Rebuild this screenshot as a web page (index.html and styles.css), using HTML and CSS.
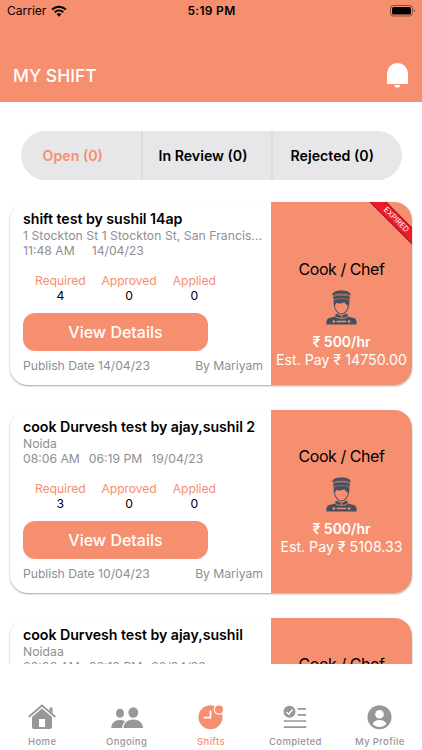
FILE: index.html
```html
<!DOCTYPE html>
<html lang="en">
<head>
    <meta charset="UTF-8">
    <meta name="viewport" content="width=device-width, initial-scale=1.0">
    <title>My Shift</title>
    <link rel="stylesheet" href="styles.css">
</head>
<body>
    <!-- Shared by every shift card -->
    <svg class="symbols" aria-hidden="true">
        <symbol id="staff" viewBox="0 0 31 35">
            <path fill="#46505c" d="M6.300 4.500C6.500 1.900 10.500.4 15.500.4s9 1.500 9.200 4.100l-1 2.200c-5.500-1.900-10.900-1.900-16.400 0z"/>
            <path fill="none" stroke="#f58f70" stroke-width=".7" d="M6.500 5.700c6-2 12-2 18 0"/>
            <path fill="#46505c" d="M7.300 6.700c5.500-1.700 10.900-1.700 16.400 0v3.800H7.300z"/>
            <path fill="none" stroke="#f58f70" stroke-width=".6" d="M7.300 9.900c5.500-1.500 10.900-1.500 16.400 0"/>
            <path fill="#46505c" d="M7.900 10.300c5-1.300 10.200-1.300 15.200 0 .5 2 .4 4.200-.3 6.300-.6 3.700-3.600 8-7.300 8s-6.700-4.300-7.300-8c-.7-2.100-.8-4.300-.3-6.300z"/>
            <path fill="#f58f70" d="M9 15.300c.6-.6 1-1.400 1.200-2.300 3.800 1 6.500.2 8.100-1.100.6 1.800 1.900 2.700 3.500 3.400 0 3.900-2.800 8.300-6.300 8.300S9 19.200 9 15.300z"/>
            <path fill="#46505c" d="M9.700 23.800l2.300.3c2 2 5 2 7 0l2.300-.3.600 2.600 5.700 1.500c2 .6 3 2.100 3 4.100v2.600H.4V32c0-2 1-3.500 3-4.100l5.700-1.500z"/>
            <path fill="none" stroke="#f58f70" stroke-width=".8" d="M9.200 26.500c2 1.500 4 1.800 6.300 1.800s4.300-.3 6.300-1.800M15.500 25.500v2.800"/>
            <path fill="none" stroke="#f58f70" stroke-width="1.300" d="M10.700 31.500h9.600"/>
            <circle cx="7.900" cy="31.500" r="1.300" fill="#f58f70"/>
            <circle cx="23.100" cy="31.500" r="1.300" fill="#f58f70"/>
        </symbol>
    </svg>

    <div class="header">
        <div class="status-bar">
            <div class="carrier">
                <span>Carrier</span>
                <svg width="16" height="12" viewBox="0 0 16 12">
                    <path fill="none" stroke="#000" stroke-width="2" d="M1.100 4.500c4-3.800 9.800-3.800 13.800 0M3.700 7.300c2.500-2.300 6.100-2.300 8.600 0"/>
                    <path d="M5.500 9.100c1.500-1.300 3.500-1.300 5 0L8 11.700z"/>
                </svg>
            </div>
            <div class="clock">5:19 PM</div>
            <div class="battery">
                <svg width="26" height="12" viewBox="0 0 26 12">
                    <rect x=".5" y=".5" width="22" height="10.500" rx="3" fill="none" stroke="#000" stroke-opacity=".45"/>
                    <rect x="2" y="2" width="19" height="7.500" rx="1.600"/>
                    <path fill-opacity=".5" d="M24 4c1.300.5 1.300 3 0 3.500z"/>
                </svg>
            </div>
        </div>
        <div class="title-bar">
            <h1>MY SHIFT</h1>
            <svg width="21" height="25" viewBox="0 0 21 25" fill="#fff">
                <path d="M0 21V10.500a10.500 10.500 0 0 1 21 0V21z"/>
                <path d="M7.500 22h5.800c-.3 1.800-1.300 2.700-2.900 2.700S7.800 23.800 7.500 22z"/>
            </svg>
        </div>
    </div>

    <div class="tabs">
        <div class="tab active">Open (0)</div>
        <div class="tab">In Review (0)</div>
        <div class="tab">Rejected (0)</div>
    </div>

    <div class="shift-list">
        <div class="card">
            <div class="info">
                <h2>shift test by sushil 14ap</h2>
                <div class="address">1 Stockton St 1 Stockton St, San Francis...</div>
                <div class="times wide"><span>11:48 AM</span><span>14/04/23</span></div>
                <div class="counts">
                    <div class="count"><span>Required</span><b>4</b></div>
                    <div class="count"><span>Approved</span><b>0</b></div>
                    <div class="count"><span>Applied</span><b>0</b></div>
                </div>
                <button class="btn">View Details</button>
                <div class="publish"><span>Publish Date 14/04/23</span><span>By Mariyam</span></div>
            </div>
            <div class="role expired">
                <div class="ribbon">EXPIRED</div>
                <div class="role-name">Cook / Chef</div>
                <svg class="role-icon"><use href="#staff"/></svg>
                <div class="rate">₹ 500/hr</div>
                <div class="pay">Est. Pay ₹ 14750.00</div>
            </div>
        </div>

        <div class="card">
            <div class="info">
                <h2>cook Durvesh test by ajay,sushil 2</h2>
                <div class="address">Noida</div>
                <div class="times"><span>08:06 AM</span><span>06:19 PM</span><span>19/04/23</span></div>
                <div class="counts">
                    <div class="count"><span>Required</span><b>3</b></div>
                    <div class="count"><span>Approved</span><b>0</b></div>
                    <div class="count"><span>Applied</span><b>0</b></div>
                </div>
                <button class="btn">View Details</button>
                <div class="publish"><span>Publish Date 10/04/23</span><span>By Mariyam</span></div>
            </div>
            <div class="role">
                <div class="role-name">Cook / Chef</div>
                <svg class="role-icon"><use href="#staff"/></svg>
                <div class="rate">₹ 500/hr</div>
                <div class="pay">Est. Pay ₹ 5108.33</div>
            </div>
        </div>

        <div class="card">
            <div class="info">
                <h2>cook Durvesh test by ajay,sushil</h2>
                <div class="address">Noidaa</div>
                <div class="times"><span>08:06 AM</span><span>06:19 PM</span><span>20/04/23</span></div>
            </div>
            <div class="role">
                <div class="role-name">Cook / Chef</div>
                <svg class="role-icon"><use href="#staff"/></svg>
                <div class="rate">₹ 500/hr</div>
                <div class="pay">Est. Pay ₹ 5108.33</div>
            </div>
        </div>
    </div>

    <div class="nav">
        <div class="nav-item">
            <svg width="28" height="26" viewBox="0 0 28 26" fill="#979797">
                <path fill="none" stroke="#979797" stroke-width="1.800" stroke-linecap="round" stroke-linejoin="round" d="M1.200 12.500L14 1.500l12.800 11"/>
                <path d="M21.500 3.500h3v6l-3-2.500z"/>
                <path fill-rule="evenodd" d="M14 4.500l10 8.600V23c0 1.300-.7 2-2 2H6c-1.300 0-2-.7-2-2v-9.900zM11 15v8h6v-8z"/>
            </svg>
            <span>Home</span>
        </div>
        <div class="nav-item">
            <svg width="32" height="26" viewBox="0 0 32 26" fill="#979797">
                <ellipse cx="9" cy="9.300" rx="4" ry="4.500"/>
                <ellipse cx="22.300" cy="8.500" rx="4.900" ry="5.200"/>
                <path d="M.3 24c.1-4.500 3.300-8 8.700-8 2.200 0 3.800.5 5.200 1.500-2 1.700-3 3.900-3.100 6.500z"/>
                <path d="M12.500 24c.2-5 4-8.500 9.800-8.500S31.700 19 32 24z"/>
            </svg>
            <span>Ongoing</span>
        </div>
        <div class="nav-item active">
            <svg width="26" height="26" viewBox="0 0 26 26">
                <circle cx="12.500" cy="13.300" r="12" fill="#f58f70"/>
                <path fill="none" stroke="#fff" stroke-width="1.700" d="M12.500 6.500v7.200H5.500"/>
                <circle cx="21" cy="5.500" r="4.700" fill="#f58f70" stroke="#fff" stroke-width="1.200"/>
            </svg>
            <span>Shifts</span>
        </div>
        <div class="nav-item">
            <svg width="24" height="26" viewBox="0 0 24 26">
                <circle cx="6.500" cy="7.800" r="6" fill="#979797"/>
                <path fill="none" stroke="#fff" stroke-width="1.500" d="M3.500 8l2.200 2.200 4-4.700"/>
                <path stroke="#979797" stroke-width="1.700" stroke-linecap="round" d="M15.300 4.800h7.200M15.300 10.800h7.200M1.500 17h21M1.500 23.200h21"/>
            </svg>
            <span>Completed</span>
        </div>
        <div class="nav-item">
            <svg width="24" height="26" viewBox="0 0 24 26">
                <circle cx="11.500" cy="13.200" r="12" fill="#979797"/>
                <circle cx="11.500" cy="10.200" r="4.300" fill="#fff"/>
                <path fill="#fff" d="M4.500 19.700c1.700-2.700 4-3.700 7-3.700s5.300 1 7 3.700c-3.700 4.300-10.300 4.300-14 0z"/>
            </svg>
            <span>My Profile</span>
        </div>
    </div>
</body>
</html>
```
FILE: styles.css
```css
* {
    box-sizing: border-box;
}
body {
    margin: 0;
    height: 750px;
    display: flex;
    flex-direction: column;
    overflow: hidden;
    background: #fff;
    color: #000;
    font-family: Inter, 'Noto Sans', sans-serif;
}
h1, h2 {
    margin: 0;
}
svg {
    display: block;
    flex: none;
    overflow: visible;
}
.symbols {
    position: absolute;
    width: 0;
    height: 0;
}
.header {
    height: 102px;
    flex: none;
    background: #f58f70;
}
.status-bar {
    display: flex;
    align-items: center;
    height: 21px;
    padding: 0 6px 0 7px;
    font-size: 12px;
}
.carrier {
    flex: 1;
    display: flex;
    align-items: center;
    gap: 5px;
}
.clock {
    font-weight: 600;
    letter-spacing: 0.3px;
}
.battery {
    flex: 1;
    display: flex;
    justify-content: flex-end;
}
.title-bar {
    display: flex;
    justify-content: space-between;
    align-items: center;
    height: 57px;
    margin-top: 26px;
    padding: 0 14px 0 13px;
}
.title-bar h1 {
    color: #fff;
    font-size: 17.5px;
    font-weight: 500;
}
.tabs {
    display: flex;
    flex: none;
    height: 49px;
    margin: 28.5px 20.5px 0;
    border-radius: 25px;
    background: #e7e7e9;
    overflow: hidden;
}
.tab {
    width: 130px;
    display: flex;
    align-items: center;
    justify-content: center;
    padding-right: 8px;
    border-left: 2px solid #dcdcde;
    font-size: 14.2px;
    font-weight: 600;
}
.tab:first-child {
    width: 120.5px;
    padding-right: 16px;
    border-left: none;
}
.tab:last-child {
    padding-right: 9.5px;
}
.tab.active {
    color: #f58f70;
}
.shift-list {
    height: 484.5px;
    flex: none;
    padding: 22px 10px 0;
    overflow: hidden;
}
.card {
    display: flex;
    height: 183px;
    width: 402px;
    margin-bottom: 25px;
    border-radius: 18px;
    background: #fff;
    box-shadow: 0 1px 2px rgba(0,0,0,0.35);
    overflow: hidden;
}
.info {
    width: 261px;
    padding: 8.5px 8px 0 13px;
    color: #8e8e93;
    font-size: 12.2px;
    line-height: 15px;
}
.info h2 {
    color: #000;
    font-size: 14.2px;
    font-weight: 600;
    line-height: 18px;
    letter-spacing: -0.04px;
    white-space: nowrap;
}
.address {
    white-space: nowrap;
    letter-spacing: 0.04px;
}
.times {
    display: flex;
    gap: 9px;
}
.times.wide {
    gap: 17px;
}
.counts {
    display: flex;
    gap: 16px;
    padding-left: 12px;
    margin-top: 15px;
}
.count {
    display: flex;
    flex-direction: column;
    align-items: center;
    color: #f58f70;
    letter-spacing: -0.1px;
}
.count b {
    color: #000;
    font-weight: 400;
}
.btn {
    display: block;
    width: 185px;
    height: 38.5px;
    margin-top: 9.5px;
    padding: 0;
    border: none;
    border-radius: 12px;
    background: #f58f70;
    color: #fff;
    font-family: inherit;
    font-size: 16px;
    font-weight: 500;
}
.publish {
    display: flex;
    justify-content: space-between;
    margin-top: 7px;
    letter-spacing: -0.03px;
}
.role {
    position: relative;
    flex: 1;
    display: flex;
    flex-direction: column;
    align-items: center;
    justify-content: center;
    background: #f58f70;
    color: #fff;
    white-space: nowrap;
    overflow: hidden;
}
.role.expired {
    padding-top: 41px;
}
.ribbon {
    position: absolute;
    top: 12.5px;
    right: -26px;
    width: 84px;
    height: 12px;
    transform: rotate(45deg);
    border: 1px solid #a01820;
    background: #ec1c2a;
    font-size: 7.7px;
    line-height: 10px;
    text-align: center;
}
.role-name {
    color: #000;
    font-size: 16px;
    line-height: 20px;
    letter-spacing: -0.45px;
}
.role-icon {
    width: 31px;
    height: 35px;
    margin: 11px 0 8px;
}
.rate {
    font-size: 14px;
    font-weight: 600;
    line-height: 18px;
}
.pay {
    font-size: 14.2px;
    line-height: 18px;
}
.nav {
    display: flex;
    flex: 1;
    padding-top: 40px;
}
.nav-item {
    flex: 1;
    display: flex;
    flex-direction: column;
    align-items: center;
    gap: 5px;
    color: #979797;
    font-size: 9.5px;
    font-weight: 500;
    line-height: 14px;
    letter-spacing: 0.35px;
}
.nav-item.active {
    color: #f58f70;
}
```
